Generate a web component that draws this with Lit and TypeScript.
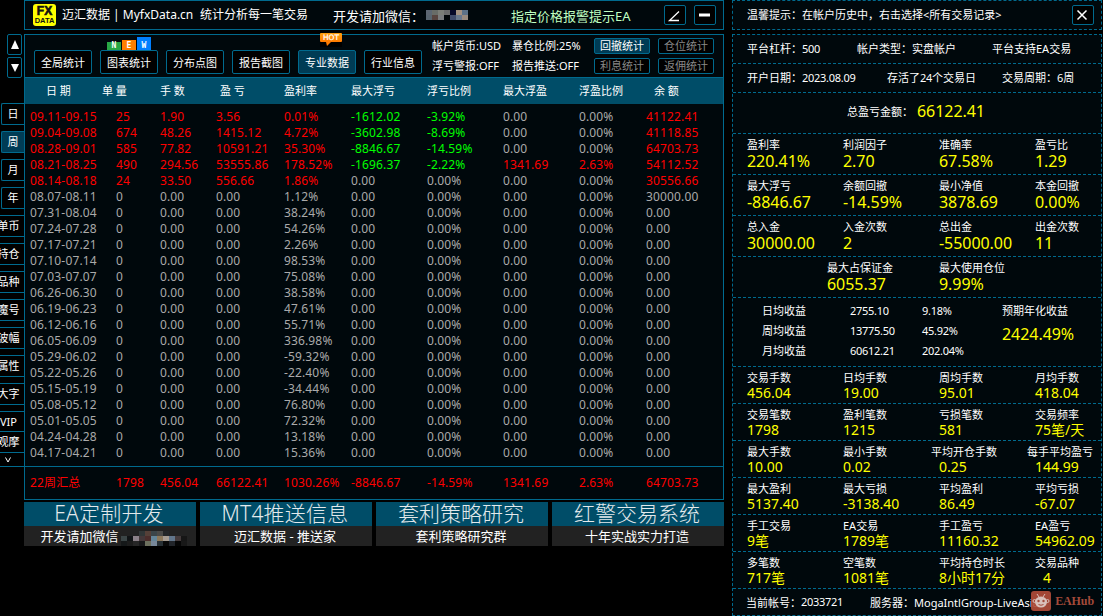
import { LitElement, html, css, nothing } from "lit";
import { customElement } from "lit/decorators.js";
import { classMap } from "lit/directives/class-map.js";
import { styleMap } from "lit/directives/style-map.js";

// date, orders, lots, profit, rate, max float loss, loss %, max float gain, gain %, balance
const WEEKS: string[][] = [
	["09.11-09.15", "25", "1.90", "3.56", "0.01%", "-1612.02", "-3.92%", "0.00", "0.00%", "41122.41"],
	["09.04-09.08", "674", "48.26", "1415.12", "4.72%", "-3602.98", "-8.69%", "0.00", "0.00%", "41118.85"],
	["08.28-09.01", "585", "77.82", "10591.21", "35.30%", "-8846.67", "-14.59%", "0.00", "0.00%", "64703.73"],
	["08.21-08.25", "490", "294.56", "53555.86", "178.52%", "-1696.37", "-2.22%", "1341.69", "2.63%", "54112.52"],
	["08.14-08.18", "24", "33.50", "556.66", "1.86%", "0.00", "0.00%", "0.00", "0.00%", "30556.66"],
	idle("08.07-08.11", "1.12%", "30000.00"),
	idle("07.31-08.04", "38.24%"),
	idle("07.24-07.28", "54.26%"),
	idle("07.17-07.21", "2.26%"),
	idle("07.10-07.14", "98.53%"),
	idle("07.03-07.07", "75.08%"),
	idle("06.26-06.30", "38.58%"),
	idle("06.19-06.23", "47.61%"),
	idle("06.12-06.16", "55.71%"),
	idle("06.05-06.09", "336.98%"),
	idle("05.29-06.02", "-59.32%"),
	idle("05.22-05.26", "-22.40%"),
	idle("05.15-05.19", "-34.44%"),
	idle("05.08-05.12", "76.80%"),
	idle("05.01-05.05", "72.32%"),
	idle("04.24-04.28", "13.18%"),
	idle("04.17-04.21", "15.36%"),
];

const TOTAL = ["22周汇总", "1798", "456.04", "66122.41", "1030.26%", "-8846.67", "-14.59%", "1341.69", "2.63%", "64703.73"];

const HEADS = ["日 期", "单 量", "手 数", "盈 亏", "盈利率", "最大浮亏", "浮亏比例", "最大浮盈", "浮盈比例", "余 额"];

// a week without any trades
function idle(date: string, rate: string, balance = "0.00") {
	return [date, "0", "0.00", "0.00", rate, "0.00", "0.00%", "0.00", "0.00%", balance];
}

@customElement("mosaic-blur")
class MosaicBlur extends LitElement {
	static properties = {
		colors: { attribute: false },
		columns: { type: Number },
	};

	static styles = css`
		:host {
			display: block;
		}

		.tiles {
			display: grid;
			grid-auto-rows: 5px;
		}
	`;

	declare colors: string[];
	declare columns: number;

	render() {
		return html`
			<div class="tiles" style=${styleMap({ gridTemplateColumns: `repeat(${this.columns}, 6px)` })}>
				${this.colors.map((c) => html`<i style=${styleMap({ background: c })}></i>`)}
			</div>
		`;
	}
}

@customElement("side-tabs")
class SideTabs extends LitElement {
	static styles = css`
		:host {
			display: flex;
			flex-direction: column;
			align-items: flex-end;
			height: 467px;
			padding-top: 34px;
			box-sizing: border-box;
			border-bottom: 1px solid var(--line);
			overflow: hidden;
			font-size: 11px;
		}

		.arrow,
		.tab {
			display: flex;
			align-items: center;
			justify-content: center;
			box-sizing: border-box;
			flex: none;
			border: 1px solid var(--line);
			background: #000;
			white-space: nowrap;
		}

		.arrow {
			width: 15px;
			height: 21px;
			margin: 0 2px 2px 0;
			border-radius: 2px;
		}

		.arrow + .arrow {
			margin-bottom: 25px;
		}

		.tab {
			width: 23px;
			height: 22px;
			margin-bottom: 6px;
			padding-bottom: 2px;
			border-right: none;
			border-radius: 2px 0 0 2px;
		}

		.tab.wide {
			width: 32px;
		}

		.tab.on {
			background: var(--active);
		}

		.tab.vip {
			height: 21px;
			margin-bottom: -1px;
			padding-bottom: 0;
		}

		.tab.last {
			margin-bottom: 0;
		}

		.more {
			display: block;
			margin: 4px 13px 0 0;
		}
	`;

	render() {
		return html`
			<div class="arrow">
				<svg width="8" height="9"><path d="M4 0 8 9H0z" fill="#fff" /></svg>
			</div>
			<div class="arrow">
				<svg width="8" height="8"><path d="M0 0H8L4 8z" fill="#fff" /></svg>
			</div>
			${["日", "周", "月", "年"].map((t) => html`<div class=${classMap({ tab: true, on: t === "周" })}>${t}</div>`)}
			${["单币", "持仓", "品种", "魔号", "波幅", "属性", "大字"].map((t) => html`<div class="tab wide">${t}</div>`)}
			<div class="tab wide vip">VIP</div>
			<div class="tab wide last">观摩</div>
			<svg class="more" width="6" height="6"><path d="M.5.5 3 5 5.500.5" fill="none" stroke="#fff" /></svg>
		`;
	}
}

@customElement("top-bar")
class TopBar extends LitElement {
	static styles = css`
		:host {
			display: flex;
			align-items: center;
			height: 30px;
			box-sizing: border-box;
			border: 1px solid var(--line);
			background: var(--panel);
			padding: 0 7px 0 8px;
			font-size: 12px;
			white-space: nowrap;
		}

		.logo {
			display: flex;
			flex-direction: column;
			align-items: center;
			width: 23px;
			height: 22px;
			border-radius: 3px;
			background: #ff0;
			color: #111;
			font-family: "Liberation Sans", Arial, sans-serif;
			font-weight: bold;
			margin-right: 6px;
		}

		.logo b {
			font-size: 12px;
			line-height: 12px;
			padding-top: 1px;
			-webkit-text-stroke: 0.6px #111;
		}

		.logo span {
			font-size: 7.5px;
			line-height: 8px;
		}

		.name {
			width: 138px;
			padding-bottom: 2px;
		}

		.slogan {
			width: 133px;
			padding-bottom: 2px;
		}

		.contact {
			width: 93px;
			font-size: 13px;
		}

		.alert {
			flex: 1;
			font-size: 13px;
			color: #c0ffc0;
			margin-left: 43px;
		}

		.btn {
			width: 20px;
			height: 18px;
			border: 1px solid var(--line);
			border-radius: 2px;
			background: #000;
			margin-left: 8px;
		}

		.btn svg {
			display: block;
		}
	`;

	render() {
		const colors = [
			"#5c6672", "#686c68", "#7c7e78", "#6c6c6c", "#06082a", "#a39182", "#5c7188",
			"#586570", "#574440", "#7a7c7e", "#020608", "#404b6c", "#69788e", "#998b80",
		];
		return html`
			<div class="logo"><b>FX</b><span>DATA</span></div>
			<div class="name">迈汇数据 | MyfxData.cn</div>
			<div class="slogan">统计分析每一笔交易</div>
			<div class="contact">开发请加微信：</div>
			<mosaic-blur .colors=${colors} .columns=${7}></mosaic-blur>
			<div class="alert">指定价格报警提示EA</div>
			<div class="btn">
				<svg width="20" height="18" fill="none" stroke="#fff" stroke-width="1.3"><path d="M14 5.500L4.500 14.500H14" /></svg>
			</div>
			<div class="btn">
				<svg width="20" height="18"><path d="M4 7.500h11v3H4z" fill="#fff" /></svg>
			</div>
		`;
	}
}

@customElement("tool-bar")
class ToolBar extends LitElement {
	static styles = css`
		:host {
			display: flex;
			align-items: flex-start;
			height: 42px;
			padding-left: 9px;
			font-size: 11px;
			white-space: nowrap;
		}

		.btn,
		.small {
			display: flex;
			align-items: center;
			justify-content: center;
			box-sizing: border-box;
			border: 1px solid var(--line);
			border-radius: 2px;
			background: #000;
		}

		.btn {
			position: relative;
			width: 58px;
			height: 24px;
			margin: 15px 8px 0 0;
		}

		.on {
			background: var(--active);
		}

		.new {
			position: absolute;
			left: 6px;
			bottom: 23px;
			display: flex;
			align-items: flex-end;
			gap: 1px;
			font: bold 8px/8px "DejaVu Sans Mono", monospace;
		}

		.new span {
			display: flex;
			align-items: flex-end;
			justify-content: center;
			width: 14px;
		}

		.n {
			height: 8px;
			background: #28a745;
		}

		.e {
			height: 10px;
			background: #ff7f00;
		}

		.w {
			height: 13px;
			background: #007fff;
		}

		.hot {
			position: absolute;
			left: 21px;
			top: -18px;
			width: 22px;
			height: 14px;
			background: #000;
		}

		.hot b {
			display: block;
			height: 9px;
			border-radius: 1px;
			background: linear-gradient(#ffa010, #ff7a00);
			text-align: center;
			font: 7.500px/9px "DejaVu Sans", sans-serif;
			-webkit-text-stroke: 0.2px #fff;
		}

		.hot svg {
			display: block;
			margin-left: 6px;
		}

		.info {
			display: grid;
			grid-template-columns: 80px 82px;
			grid-auto-rows: 20px;
			line-height: 20px;
			padding: 1px 0 0 2px;
		}

		.switches {
			display: grid;
			grid-template-columns: 56px 56px;
			grid-auto-rows: 16px;
			gap: 4px 8px;
			padding-top: 3px;
		}

		.small {
			color: #888;
			line-height: 14px;
		}

		.small.on {
			color: #fff;
		}
	`;

	badge(i: number) {
		if (i === 1) {
			return html`<div class="new"><span class="n">N</span><span class="e">E</span><span class="w">W</span></div>`;
		}
		if (i === 4) {
			return html`
				<div class="hot">
					<b>HOT</b>
					<svg width="6" height="4"><path d="M0 0H5L1 4z" fill="#ff7a00" /></svg>
				</div>
			`;
		}
		return nothing;
	}

	render() {
		const tools = ["全局统计", "图表统计", "分布点图", "报告截图", "专业数据", "行业信息"];
		return html`
			${tools.map((t, i) => html`<div class=${classMap({ btn: true, on: i === 4 })}>${t}${this.badge(i)}</div>`)}
			<div class="info">
				<span>帐户货币:USD</span>
				<span>暴仓比例:25%</span>
				<span>浮亏警报:OFF</span>
				<span>报告推送:OFF</span>
			</div>
			<div class="switches">
				<div class="small on">回撤统计</div>
				<div class="small">仓位统计</div>
				<div class="small">利息统计</div>
				<div class="small">返佣统计</div>
			</div>
		`;
	}
}

@customElement("week-table")
class WeekTable extends LitElement {
	static styles = css`
		:host {
			display: block;
			font-size: 12px;
			white-space: nowrap;
		}

		.head,
		.row {
			display: grid;
			align-items: center;
		}

		.head {
			grid-template-columns: 56px 58px 60px 64px 67px 76px 76px 76px 75px auto;
			height: 24px;
			padding: 0 0 2px 21px;
			border-top: 1px solid var(--line);
			background: var(--bar);
			font-size: 11px;
		}

		.body {
			height: 357px;
			padding-top: 5px;
		}

		.row {
			grid-template-columns: 86px 44px 56px 68px 67px 76px 76px 76px 67px auto;
			height: 16px;
			padding-left: 5px;
			line-height: 16px;
			color: #aaa;
			letter-spacing: 0.14px;
		}

		.total {
			height: 32px;
			border-top: 1px solid var(--line);
			color: #f00;
		}

		.up {
			color: #f00;
		}

		.down {
			color: #0f0;
		}
	`;

	tone(row: string[], i: number) {
		const traded = row[1] !== "0";
		if (i < 5 || i === 9) return { up: traded };
		const value = parseFloat(row[i]);
		return { up: value > 0, down: value < 0 };
	}

	render() {
		return html`
			<div class="head">${HEADS.map((h) => html`<span>${h}</span>`)}</div>
			<div class="body">
				${WEEKS.map(
					(row) => html`
						<div class="row">${row.map((v, i) => html`<span class=${classMap(this.tone(row, i))}>${v}</span>`)}</div>
					`
				)}
			</div>
			<div class="row total">${TOTAL.map((v) => html`<span>${v}</span>`)}</div>
		`;
	}
}

@customElement("promo-bar")
class PromoBar extends LitElement {
	static styles = css`
		:host {
			display: grid;
			grid-template-columns: repeat(4, 172px);
			gap: 4px;
			margin-top: 2px;
			text-align: center;
			white-space: nowrap;
		}

		.title {
			height: 24px;
			line-height: 23px;
			padding-right: 2px;
			font-size: 21px;
			font-weight: 300;
			background: var(--bar);
			color: #e4eaec;
		}

		.title.latin {
			letter-spacing: 0.2px;
		}

		.sub {
			display: flex;
			justify-content: center;
			box-sizing: border-box;
			height: 20px;
			line-height: 20px;
			padding-right: 2px;
			font-size: 13px;
			background: #222;
		}

		.sub.masked {
			padding: 0 0 0 7px;
		}

		mosaic-blur {
			align-self: end;
			margin: 0 0 0 2px;
		}
	`;

	render() {
		const colors = [
			"#222", "#222", "#222", "#303637", "#554038", "#3b4549", "#4a4a48", "#232628", "#222", "#222", "#222",
			"#3b4546", "#111416", "#8b8088", "#44383a", "#4c2d2b", "#64869a", "#8b785b", "#a69c92", "#62768b", "#453b3c", "#161616",
			"#151819", "#1c1c1c", "#262626", "#19191b", "#6d705e", "#78889a", "#283035", "#090909", "#22252a", "#060606", "#181818",
		];
		return html`
			<div>
				<div class="title latin">EA定制开发</div>
				<div class="sub masked">开发请加微信<mosaic-blur .colors=${colors} .columns=${11}></mosaic-blur></div>
			</div>
			<div>
				<div class="title latin">MT4推送信息</div>
				<div class="sub">迈汇数据&nbsp;- 推送家</div>
			</div>
			<div>
				<div class="title">套利策略研究</div>
				<div class="sub">套利策略研究群</div>
			</div>
			<div>
				<div class="title">红警交易系统</div>
				<div class="sub">十年实战实力打造</div>
			</div>
		`;
	}
}

@customElement("account-report")
class AccountReport extends LitElement {
	static styles = css`
		:host {
			display: flex;
			flex-direction: column;
			gap: 4px;
			font-size: 11px;
			white-space: nowrap;
		}

		.tip,
		.report {
			box-sizing: border-box;
			border: 1px dashed var(--line);
			background: var(--panel);
		}

		.tip {
			display: flex;
			align-items: center;
			justify-content: space-between;
			height: 30px;
			padding: 0 7px 0 14px;
		}

		.tip span {
			padding-bottom: 2px;
		}

		.close {
			width: 20px;
			height: 18px;
			border: 1px solid var(--line);
			border-radius: 2px;
			background: #000;
		}

		.close svg {
			display: block;
		}

		.report {
			height: 582px;
		}

		.line {
			display: grid;
			align-items: center;
			box-sizing: border-box;
			height: 29px;
			padding: 0 0 2px 14px;
			border-bottom: 1px dashed var(--line);
		}

		.account {
			grid-template-columns: 110px 135px auto;
		}

		.period {
			grid-template-columns: 140px 115px auto;
		}

		.net {
			grid-template-columns: 70px auto;
			height: 41px;
			padding: 0 0 4px 114px;
		}

		.cells {
			display: grid;
			grid-template-columns: repeat(4, 96px);
			box-sizing: border-box;
			height: 41px;
			padding: 3px 0 0 14px;
			border-bottom: 1px dashed var(--line);
			line-height: 16px;
		}

		.cells.pair {
			grid-template-columns: 112px auto;
			padding-left: 94px;
		}

		.cells.short {
			height: 37px;
			line-height: 15px;
		}

		.value {
			color: #ff0;
			font-size: 16px;
			letter-spacing: -0.05px;
		}

		.short .value {
			font-size: 14px;
			letter-spacing: 0;
		}

		.num {
			letter-spacing: -0.28px;
		}

		.shift {
			margin-left: -8px;
		}

		.inset {
			padding-left: 8px;
		}

		.income {
			display: flex;
			box-sizing: border-box;
			height: 69px;
			padding: 3px 0 0 29px;
			border-bottom: 1px dashed var(--line);
			line-height: 20px;
		}

		.averages {
			display: grid;
			grid-template-columns: 88px 72px 80px;
			grid-auto-rows: 20px;
		}

		.income .value {
			line-height: 27px;
		}

		.foot {
			position: relative;
			display: flex;
			align-items: center;
			box-sizing: border-box;
			height: 27px;
			padding: 0 0 2px 13px;
		}

		.number {
			width: 69px;
			letter-spacing: -0.28px;
		}

		.mark {
			position: absolute;
			right: 7px;
			top: 2px;
			display: flex;
			align-items: center;
			justify-content: space-between;
			width: 63px;
			height: 20px;
			color: #a34a3a;
			font: bold 12px/20px "Liberation Serif", serif;
			letter-spacing: -0.1px;
		}
	`;

	cells(items: string[], kind = "") {
		const pairs = items.map((item) => item.split(" "));
		return html`
			<div class="cells ${kind}">
				${pairs.map(
					([label, value]) => html`
						<div>
							<div class=${classMap({ shift: kind === "short" && label.length > 5 && value !== "8小时17分" })}>${label}</div>
							<div class=${classMap({ value: true, inset: value === "4" })}>${value}</div>
						</div>
					`
				)}
			</div>
		`;
	}

	render() {
		return html`
			<div class="tip">
				<span>温馨提示：在帐户历史中，右击选择&lt;所有交易记录&gt;</span>
				<div class="close">
					<svg width="20" height="18" stroke="#fff" stroke-width="1.500"><path d="M4.500 4.500l9 9M13.500 4.500l-9 9" /></svg>
				</div>
			</div>
			<div class="report">
				<div class="line account">
					<span>平台杠杆：<span class="num">500</span></span>
					<span>帐户类型：实盘帐户</span>
					<span>平台支持EA交易</span>
				</div>
				<div class="line period">
					<span>开户日期：<span class="num">2023.08.09</span></span>
					<span>存活了<span class="num">24</span>个交易日</span>
					<span>交易周期：6周</span>
				</div>
				<div class="line net">
					<span>总盈亏金额：</span>
					<span class="value">66122.41</span>
				</div>
				${this.cells(["盈利率 220.41%", "利润因子 2.70", "准确率 67.58%", "盈亏比 1.29"])}
				${this.cells(["最大浮亏 -8846.67", "余额回撤 -14.59%", "最小净值 3878.69", "本金回撤 0.00%"])}
				${this.cells(["总入金 30000.00", "入金次数 2", "总出金 -55000.00", "出金次数 11"])}
				${this.cells(["最大占保证金 6055.37", "最大使用仓位 9.99%"], "pair")}
				<div class="income">
					<div class="averages">
						<span>日均收益</span><span class="num">2755.10</span><span class="num">9.18%</span>
						<span>周均收益</span><span class="num">13775.50</span><span class="num">45.92%</span>
						<span>月均收益</span><span class="num">60612.21</span><span class="num">202.04%</span>
					</div>
					<div>
						<div>预期年化收益</div>
						<div class="value">2424.49%</div>
					</div>
				</div>
				${this.cells(["交易手数 456.04", "日均手数 19.00", "周均手数 95.01", "月均手数 418.04"], "short")}
				${this.cells(["交易笔数 1798", "盈利笔数 1215", "亏损笔数 581", "交易频率 75笔/天"], "short")}
				${this.cells(["最大手数 10.00", "最小手数 0.02", "平均开仓手数 0.25", "每手平均盈亏 144.99"], "short")}
				${this.cells(["最大盈利 5137.40", "最大亏损 -3138.40", "平均盈利 86.49", "平均亏损 -67.07"], "short")}
				${this.cells(["手工交易 9笔", "EA交易 1789笔", "手工盈亏 11160.32", "EA盈亏 54962.09"], "short")}
				${this.cells(["多笔数 717笔", "空笔数 1081笔", "平均持仓时长 8小时17分", "交易品种 4"], "short")}
				<div class="foot">
					<span>当前帐号：</span>
					<span class="number">2033721</span>
					<span>服务器：MogaIntlGroup-LiveAsia</span>
					<div class="mark">
						<svg width="20" height="20">
							<rect width="20" height="20" rx="3" fill="#b04c3a" fill-opacity="0.92" />
							<g fill="none" stroke="#d9c0ba">
								<path d="M6 3l2 3M14 3l-2 3" />
								<circle cx="3.500" cy="10" r="1.500" />
								<circle cx="16.500" cy="10" r="1.500" />
							</g>
							<ellipse cx="10" cy="11" rx="6" ry="5.500" fill="#d9c0ba" />
							<circle cx="7.500" cy="10" r="1.200" fill="#a34a3a" />
							<circle cx="12.500" cy="10" r="1.200" fill="#a34a3a" />
							<path d="M7.500 13.500q2.500 1.500 5 0" fill="none" stroke="#a34a3a" />
						</svg>
						<span>EAHub</span>
					</div>
				</div>
			</div>
		`;
	}
}

@customElement("app-root")
class AppRoot extends LitElement {
	static styles = css`
		:host {
			--line: #006a8e;
			--panel: #00080c;
			--bar: #004d68;
			--active: #003c55;
			display: grid;
			grid-template-columns: 24px 700px 378px;
			width: 1103px;
			height: 616px;
			overflow: hidden;
			background: #000;
			color: #fff;
			font-family: "Noto Sans", "Noto Sans CJK SC", sans-serif;
		}

		main {
			display: flex;
			flex-direction: column;
		}

		.panel {
			box-sizing: border-box;
			height: 466px;
			margin-top: 4px;
			border: 1px solid var(--line);
			background: var(--panel);
		}

		account-report {
			margin-left: 8px;
			width: 370px;
		}
	`;

	render() {
		return html`
			<side-tabs></side-tabs>
			<main>
				<top-bar></top-bar>
				<div class="panel">
					<tool-bar></tool-bar>
					<week-table></week-table>
				</div>
				<promo-bar></promo-bar>
			</main>
			<account-report></account-report>
		`;
	}
}
